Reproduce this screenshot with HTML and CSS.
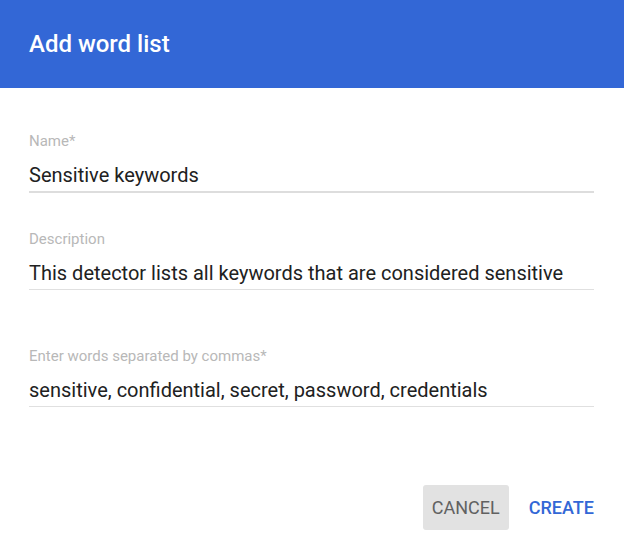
FILE: index.html
```html
<!DOCTYPE html>
<html>
<head>
<meta charset="utf-8">
<link rel="stylesheet" href="styles.css">
</head>
<body>
<div class="dialog">
  <header class="dialog-header">
    <h1 class="dialog-title">Add word list</h1>
  </header>
  <div class="dialog-body">
    <div class="field field-name">
      <div class="field-label">Name*</div>
      <div class="field-value">Sensitive keywords</div>
    </div>
    <div class="field field-desc">
      <div class="field-label">Description</div>
      <div class="field-value">This detector lists all keywords that are considered sensitive</div>
    </div>
    <div class="field field-words">
      <div class="field-label">Enter words separated by commas*</div>
      <div class="field-value">sensitive, confidential, secret, password, credentials</div>
    </div>
  </div>
  <footer class="dialog-actions">
    <button class="btn btn-cancel">CANCEL</button>
    <button class="btn btn-create">CREATE</button>
  </footer>
</div>
</body>
</html>
```

FILE: styles.css
```css
html, body {
  margin: 0;
  padding: 0;
  background: #ffffff;
}
body {
  font-family: Roboto, "Liberation Sans", Arial, sans-serif;
  width: 624px;
  height: 539px;
  overflow: hidden;
}
.dialog {
  display: flex;
  flex-direction: column;
  height: 539px;
}
.dialog-header {
  background: #3367d6;
  height: 88px;
  display: flex;
  align-items: center;
  padding: 0 29px;
  box-sizing: border-box;
}
.dialog-title {
  margin: 0;
  color: #ffffff;
  font-size: 24px;
  font-weight: 500;
  line-height: 30px;
}
.dialog-body {
  padding: 43px 30px 0 29px;
  display: flex;
  flex-direction: column;
}
.field-label {
  font-size: 15px;
  line-height: 20px;
  color: #b8b8b8;
}
.field-value {
  font-size: 20px;
  line-height: 24px;
  color: #212121;
  margin-top: 12px;
  padding-bottom: 4px;
  border-bottom: 1px solid #e0e0e0;
  white-space: nowrap;
}
.field-name .field-value {
  border-bottom: 2px solid #dddddd;
}
.field-desc {
  margin-top: 36px;
}
.field-words {
  margin-top: 56px;
}
.dialog-actions {
  display: flex;
  justify-content: flex-end;
  align-items: center;
  gap: 12px;
  padding: 0 30px 0 29px;
  margin-top: 78px;
}
.btn {
  font-family: Roboto, "Liberation Sans", Arial, sans-serif;
  font-size: 18px;
  border: none;
  background: transparent;
  height: 45px;
  padding: 0 8px;
  border-radius: 3px;
  cursor: pointer;
}
.btn-cancel {
  background: #e2e2e2;
  color: #616161;
  width: 86px;
  padding: 0;
}
.btn-create {
  color: #3367d6;
  font-weight: 500;
  padding: 0 0 0 8px;
}
```
